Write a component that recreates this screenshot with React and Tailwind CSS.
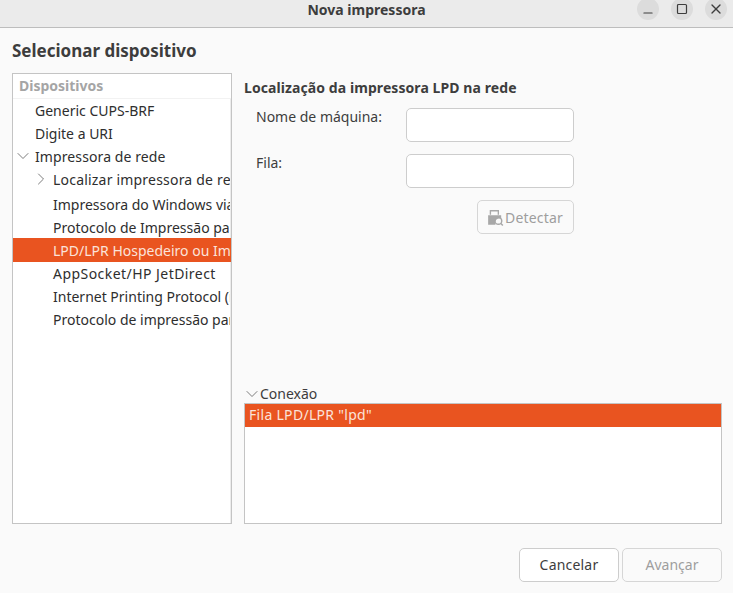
import { ChevronDown, ChevronRight, Minus, Square, X } from 'lucide-react';

const font = "font-['Noto_Sans','Open_Sans',sans-serif]";

const rows = [
    { label: 'Generic CUPS-BRF', pad: 'pl-[22px]' },
    { label: 'Digite a URI', pad: 'pl-[22px]' },
    { label: 'Impressora de rede', pad: 'pl-[22px] tracking-[0.1px]', open: true },
    { label: 'Localizar impressora de rede', pad: 'pl-10 h-[25px] tracking-[0.2px]', closed: true },
    { label: 'Impressora do Windows via SAMBA', pad: 'pl-10' },
    { label: 'Protocolo de Impressão para Internet', pad: 'pl-10' },
    { label: 'LPD/LPR Hospedeiro ou Impressora', pad: 'pl-10', selected: true },
    { label: 'AppSocket/HP JetDirect', pad: 'pl-10 tracking-[0.45px]' },
    { label: 'Internet Printing Protocol (ipp)', pad: 'pl-10' },
    { label: 'Protocolo de impressão para Internet', pad: 'pl-10' },
];

const WinButton = ({ children }) => (
    <div className="w-[22px] h-[22px] rounded-full bg-[#dcdcdc] flex items-center justify-center text-[#3d3d3d]">
        {children}
    </div>
);

const Field = ({ label }) => (
    <div className="flex h-[34px] ml-3">
        <span className="w-[150px] text-[14px] leading-[18px] text-[#3d3d3d]">{label}</span>
        <div className="w-[168px] h-[34px] bg-white border border-[#cdcdcd] rounded-[5px]" />
    </div>
);

const App = () => {
    return (
        <div className={`${font} w-[733px] h-[593px] bg-[#fafafa] flex flex-col overflow-hidden text-[#3d3d3d]`}>
            <header className="h-[28px] shrink-0 bg-[#ebebeb] border-b border-[#bdbdbd] relative flex items-center justify-center overflow-hidden">
                <span className="text-[14px] font-bold text-[#3d3d3d] -mt-[8px]">Nova impressora</span>
                <div className="absolute right-[6px] -top-[2px] flex gap-[12px]">
                    <WinButton><Minus size={14} strokeWidth={2} className="mt-[7px]" /></WinButton>
                    <WinButton><Square size={12} strokeWidth={2.4} /></WinButton>
                    <WinButton><X size={16} strokeWidth={2} /></WinButton>
                </div>
            </header>

            <main className="flex-1 flex flex-col pl-3 pr-[11px]">
                <h1 className="h-[45px] pt-[12px] text-[17px] leading-[22px] font-bold text-[#3d3d3d]">
                    Selecionar dispositivo
                </h1>
                <div className="flex gap-3 h-[451px]">
                    <div className="w-[220px] bg-white border border-[#c4c4c4] flex flex-col overflow-hidden">
                        <div className="h-[25px] pl-[6px] border-b border-[#f2f2f2] text-[14px] leading-[24px] font-bold text-[#a5a5a5]">
                            Dispositivos
                        </div>
                        <div className="flex-1 flex flex-col overflow-hidden">
                            {rows.map((row) => (
                                <div
                                    key={row.label}
                                    className={`relative ${row.selected ? 'h-[24px] -mt-px leading-[25px] bg-[#e95420] text-[#fbe3da]' : 'h-[23px] leading-[23px] text-[#2e2e2e] border-r border-[#ececec]'} ${row.pad} text-[14px] whitespace-nowrap overflow-hidden`}
                                >
                                    {row.open && (
                                        <ChevronDown size={20} strokeWidth={1.1} className="absolute left-0 top-[1px] text-[#707070]" />
                                    )}
                                    {row.closed && (
                                        <ChevronRight size={20} strokeWidth={1.1} className="absolute left-[18px] top-[1px] text-[#707070]" />
                                    )}
                                    {row.label}
                                </div>
                            ))}
                            <div className="flex-1 border-r border-[#ececec]" />
                        </div>
                    </div>

                    <div className="flex-1 flex flex-col">
                        <h2 className="h-[35px] pt-[4px] text-[14px] tracking-[0.08px] leading-[22px] font-bold text-[#3d3d3d]">
                            Localização da impressora LPD na rede
                        </h2>
                        <div className="flex flex-col gap-3">
                            <Field label="Nome de máquina:" />
                            <Field label="Fila:" />
                            <div className="ml-[233px] w-[97px] h-[34px] pl-[9px] border border-[#d6d6d6] rounded-[5px] flex items-center gap-[1px] text-[14px] tracking-[0.2px] text-[#9e9e9e]">
                                <svg width="17" height="17" viewBox="1 1 15 15" fill="none" className="shrink-0">
                                    <path d="M4 6V2.5h7V6" stroke="#a8a8a8" strokeWidth="1.2" />
                                    <path d="M2 6.5h11.5v3a4 4 0 0 0-5 5.5H2z" fill="#a8a8a8" />
                                    <circle cx="11" cy="11.5" r="3" stroke="#a8a8a8" strokeWidth="1.3" />
                                    <path d="M13 13.5l2 2" stroke="#a8a8a8" strokeWidth="1.3" />
                                </svg>
                                Detectar
                            </div>
                        </div>
                        <div className="mt-[150px] h-[19px] relative pl-4 text-[14px] leading-[20px] text-[#3d3d3d]">
                            <ChevronDown size={20} strokeWidth={1.1} className="absolute -left-[2px] top-0 text-[#707070]" />
                            Conexão
                        </div>
                        <div className="flex-1 bg-white border border-[#c4c4c4]">
                            <div className="h-[23px] pl-1 bg-[#e95420] text-[14px] tracking-[0.3px] leading-[22px] text-[#fbe3da]">
                                Fila LPD/LPR "lpd"
                            </div>
                        </div>
                    </div>
                </div>
                <footer className="flex justify-end gap-[3px] mt-[24px]">
                    <div className="w-[100px] h-[34px] bg-white border border-[#cdcdcd] rounded-[5px] text-center text-[14px] tracking-[0.2px] leading-[32px] text-[#3d3d3d]">
                        Cancelar
                    </div>
                    <div className="w-[100px] h-[34px] border border-[#d6d6d6] rounded-[5px] text-center text-[14px] leading-[32px] text-[#9e9e9e]">
                        Avançar
                    </div>
                </footer>
            </main>
        </div>
    );
};

export default App;
